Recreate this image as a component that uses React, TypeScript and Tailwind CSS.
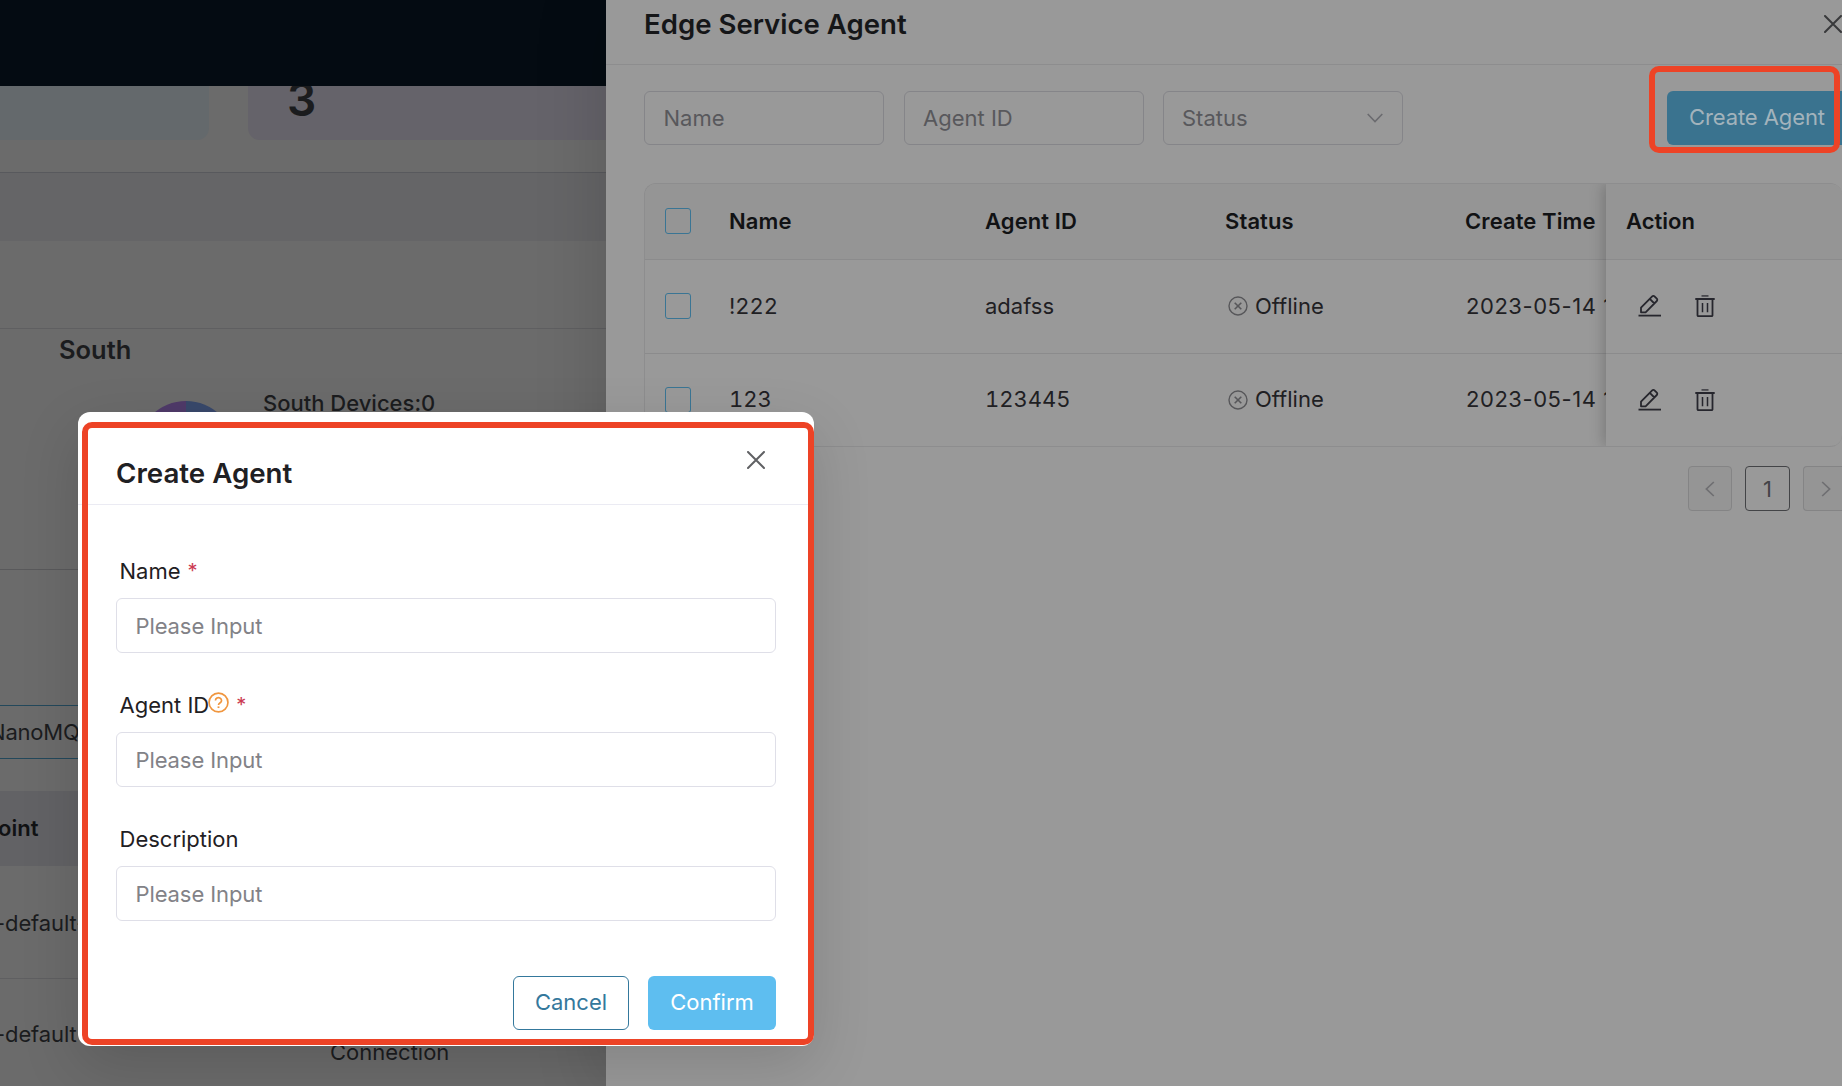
import React from "react";

function CloseIcon() {
  return (
    <svg viewBox="0 0 18 18" className="size-[18px] shrink-0" fill="none" stroke="currentColor" strokeWidth="2" strokeLinecap="round">
      <path d="M1 1 17 17M17 1 1 17" />
    </svg>
  );
}

function EditIcon() {
  return (
    <svg viewBox="0 0 24 24" className="size-6" fill="none" stroke="currentColor" strokeWidth="1.8" strokeLinejoin="round">
      <path d="M.5 21.6H23" />
      <path d="M3 18.3V13.6L14.2 2.4a1.6 1.6 0 0 1 2.3 0l2.3 2.3a1.6 1.6 0 0 1 0 2.3L7.6 18.3ZM11.8 4.9l4.6 4.6" />
    </svg>
  );
}

function TrashIcon() {
  return (
    <svg viewBox="0 0 20 24" className="h-6 w-5" fill="none" stroke="currentColor" strokeWidth="1.8">
      <path d="M6.5 1.9h7" stroke="#4a4a4f" />
      <path d="M.3 5h19.4M2.5 5v16.3a.8.8 0 0 0 .8.8h13.4a.8.8 0 0 0 .8-.8V5" />
      <path d="M7.5 9v9.3M12.5 9v9.3" strokeWidth="1.5" />
    </svg>
  );
}

function OfflineIcon() {
  return (
    <svg viewBox="0 0 20 20" className="size-5" fill="none" stroke="#57575a" strokeWidth="1.4">
      <circle cx="10" cy="10" r="9" />
      <path d="m6.7 6.7 6.6 6.6M13.3 6.7l-6.6 6.6" strokeWidth="1.6" />
    </svg>
  );
}

function Checkbox() {
  return <span className="size-[26px] shrink-0 rounded-[3px] border-[1.5px] border-[#3a7594]" />;
}

function Dashboard() {
  return (
    <div className="flex w-[606px] shrink-0 flex-col overflow-hidden bg-[#6b6b6b] text-[#1b1c1e]">
      <div className="z-10 h-[86px] shrink-0 bg-[#040b12]" />
      <div className="flex h-[54px] shrink-0 gap-[39px]">
        <div className="w-[209px] rounded-br-xl bg-[#64696c]" />
        <div className="flex flex-1 items-end rounded-bl-xl bg-[#65636a] pb-4 pl-[39px]">
          <span className="text-[46px] leading-[50px] font-semibold">3</span>
        </div>
      </div>
      <div className="mt-8 h-[69px] shrink-0 border-t border-[#58595d] bg-[#656567]" />
      <div className="mt-[87px] flex h-[241px] shrink-0 flex-col border-t border-[#5f5f61] pl-[59px]">
        <h2 className="mt-[6px] text-[25.5px] leading-[30px] font-semibold">South</h2>
        <div className="mt-9 flex">
          <svg viewBox="0 0 98 98" className="ml-[78px] size-[98px]">
            <path d="M49 0A49 49 0 0 0 49 98Z" fill="#4f3a69" />
            <path d="M49 0A49 49 0 0 1 49 98Z" fill="#38486b" />
          </svg>
          <span className="-mt-3 ml-[28px] text-[22px] leading-7 font-medium">South Devices:0</span>
        </div>
      </div>
      <div className="h-[136px] shrink-0 border-t border-[#59595b]" />
      <div className="-ml-10 flex h-[54px] w-60 shrink-0 items-center border border-[#23485b] pl-[28px] text-[22px] tracking-[-0.2px]">NanoMQ</div>
      <div className="mt-8 flex h-[75px] shrink-0 items-center bg-[#626265]">
        <span className="-ml-4 text-[22px] font-semibold text-[#111214]">Point</span>
      </div>
      <div className="flex h-[113px] shrink-0 items-center border-b border-[#5f5f61] pt-0.5 text-[22px]">
        <span className="-ml-[5px] tracking-[-0.1px]">-default-</span>
      </div>
      <div className="flex h-[108px] shrink-0 items-center pt-0.5 text-[22px]">
        <span className="-ml-[5px] w-[335px] tracking-[-0.1px]">-default</span>
        <span className="mt-[37px]">Connection</span>
      </div>
    </div>
  );
}

const rows = [
  { name: "!222", id: "adafss" },
  { name: "123", id: "123445" },
];

function Drawer() {
  return (
    <div className="z-20 flex flex-1 flex-col overflow-hidden bg-[#999999] text-[22px] text-[#1f2023] shadow-[-10px_0_60px_rgba(0,0,0,0.13)]">
      <div className="flex h-[65px] shrink-0 items-center justify-between border-b border-[#8d8d8e] pb-[14px] pl-[38px]">
        <h1 className="text-[27.6px] font-semibold text-[#151618]">Edge Service Agent</h1>
        <span className="-mt-0.5 text-[#38393b]">
          <CloseIcon />
        </span>
      </div>
      <div className="mt-[26px] flex h-[54px] shrink-0 pl-[38px] text-[#58585c]">
        <div className="flex w-60 items-center rounded-md border border-[#858589] pl-[18.5px]">Name</div>
        <div className="ml-5 flex w-60 items-center rounded-md border border-[#858589] pl-[18px]">Agent ID</div>
        <div className="ml-[19px] flex w-60 items-center justify-between rounded-md border border-[#858589] pr-[19px] pl-[18px]">
          Status
          <svg viewBox="0 0 16 10" className="h-[10px] w-4" fill="none" stroke="#6b6b6f" strokeWidth="1.6">
            <path d="m.7 1 7.3 7.6L15.3 1" />
          </svg>
        </div>
        <div className="ml-auto flex w-[175px] items-center rounded-l-md bg-[#3a738f] pb-0.5 pl-[22px] tracking-[-0.1px] whitespace-nowrap text-[#a3b3bc]">Create Agent</div>
      </div>

      <div className="mt-[38px] ml-[38px] flex h-[264px] shrink-0 overflow-hidden rounded-xl border border-r-0 border-[#8d8d8e]">
        <div className="w-[961px] shrink-0 overflow-hidden">
          <div className="flex h-[76px] items-center border-b border-[#8b8b8c] bg-[#959595] font-semibold tracking-[0.1px] whitespace-nowrap text-[#111214]">
            <div className="flex w-[84px] pb-px pl-5">
              <Checkbox />
            </div>
            <div className="w-64">Name</div>
            <div className="w-60">Agent ID</div>
            <div className="w-60">Status</div>
            <div>Create Time</div>
          </div>
          {rows.map((r) => (
            <div key={r.id} className="flex h-[93.5px] items-center border-b border-[#8b8b8c] whitespace-nowrap">
              <div className="flex w-[84px] pl-5">
                <Checkbox />
              </div>
              <div className="w-64 tabular-nums">{r.name}</div>
              <div className="w-60 tabular-nums">{r.id}</div>
              <div className="flex w-60 items-center gap-[7px] pl-[3px]">
                <OfflineIcon />
                Offline
              </div>
              <div className="w-[141px] shrink-0 overflow-hidden pl-px tracking-[0.55px]">2023-05-14 17:21:08</div>
            </div>
          ))}
        </div>
        <div className="flex-1 bg-[#999999] shadow-[-2px_0_14px_rgba(0,0,0,0.22)]">
          <div className="flex h-[76px] items-center border-b border-[#8b8b8c] bg-[#959595] pl-5 font-semibold text-[#111214]">Action</div>
          {rows.map((r) => (
            <div key={r.id} className="flex h-[93.5px] items-center gap-[33px] border-b border-[#8b8b8c] pl-8 text-[#26262d]">
              <EditIcon />
              <TrashIcon />
            </div>
          ))}
        </div>
      </div>

      <div className="mt-[19px] flex h-[45px] shrink-0 justify-end gap-[13px]">
        <div className="flex w-11 items-center justify-center rounded-[4px] border border-[#848485] bg-[#959595]">
          <svg viewBox="0 0 10 16" className="-ml-px h-4 w-[10px]" fill="none" stroke="#6f6f72" strokeWidth="1.7">
            <path d="M8.8 1 1.4 8l7.4 7" />
          </svg>
        </div>
        <div className="flex w-[45px] items-center justify-center rounded-[4px] border-[1.5px] border-[#434447] pt-px text-[#434447]">1</div>
        <div className="flex w-[39px] items-center rounded-l-[4px] border border-r-0 border-[#848485] bg-[#959595] pl-[17px]">
          <svg viewBox="0 0 10 16" className="h-4 w-[10px]" fill="none" stroke="#6f6f72" strokeWidth="1.7">
            <path d="m1.2 1 7.4 7-7.4 7" />
          </svg>
        </div>
      </div>
    </div>
  );
}

function Field({ label, required, help }: { label: string; required?: boolean; help?: boolean }) {
  return (
    <div>
      <div className="flex h-7 items-center pl-[3.5px] text-[#1f2023]">
        {label}
        {help && (
          <svg viewBox="0 0 20 20" className="mt-[-6px] -ml-px size-[21px]" fill="none" stroke="#f0963f" strokeWidth="1.6">
            <circle cx="10" cy="10" r="9" />
            <path d="M7.1 8a2.9 2.7 0 1 1 4.6 2.2c-1.1.8-1.7 1.2-1.7 2.2" />
            <path d="M10 13.7v1.6" strokeWidth="1.8" />
          </svg>
        )}
        {required && <span className="ml-[7px] text-[20px] text-[#cb3a50]">*</span>}
      </div>
      <div className="mt-[13px] flex h-[55px] items-center rounded-md border border-[#dfdfe8] pt-0.5 pl-[18.5px] tracking-[-0.1px] text-[#828287]">Please Input</div>
    </div>
  );
}

function CreateDialog() {
  return (
    <div className="absolute top-[412px] left-[78px] z-30 h-[634px] w-[736px] rounded-xl bg-white text-[22px] shadow-[0_20px_60px_rgba(0,0,0,0.14)]">
      <div className="flex h-[93px] justify-between border-b border-[#ebebf3] pr-[49px] pl-[38px]">
        <h2 className="mt-[44px] text-[27.7px] leading-[34px] font-semibold text-[#1f2023]">Create Agent</h2>
        <span className="mt-[39px] text-[#606164]">
          <CloseIcon />
        </span>
      </div>
      <div className="flex flex-col gap-[38px] px-[38px] pt-[52px]">
        <Field label="Name" required />
        <Field label="Agent ID" required help />
        <Field label="Description" />
      </div>
      <div className="mt-[55px] flex h-[54px] justify-end gap-[19px] pr-[38px]">
        <button className="w-[116px] rounded-md border-[1.5px] border-[#34789c] pb-0.5 text-[#34789c]">Cancel</button>
        <button className="w-32 rounded-md bg-[#5ebef0] pb-0.5 text-white">Confirm</button>
      </div>
      <div className="absolute top-[10px] right-0 bottom-px left-1 rounded-[10px] border-6 border-[#ed4326]" />
    </div>
  );
}

export default function App() {
  return (
    <div className="relative flex h-[1086px] w-full overflow-hidden font-['Inter',sans-serif]">
      <Dashboard />
      <Drawer />
      <div className="absolute top-[66px] left-[1649px] z-20 h-[87px] w-[191px] rounded-[10px] border-6 border-[#ed4326]" />
      <CreateDialog />
    </div>
  );
}
